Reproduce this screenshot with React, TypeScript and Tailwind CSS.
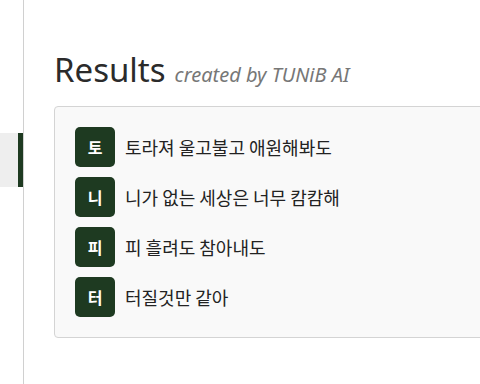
import React from "react";

const rows = [
  { k: "토", t: "토라져 울고불고 애원해봐도" },
  { k: "니", t: "니가 없는 세상은 너무 캄캄해" },
  { k: "피", t: "피 흘려도 참아내도" },
  { k: "터", t: "터질것만 같아" },
];

export default function App() {
  return (
    <div
      className="flex h-[384px] w-[480px] overflow-hidden bg-white"
      style={{ fontFamily: '"Noto Sans", "Noto Sans CJK KR", sans-serif' }}
    >
      <div className="flex w-[24px] shrink-0 flex-col border-r border-[#d0d0d0] pt-[133px]">
        <div className="flex h-[54px]">
          <div className="flex-1 bg-[#eeeeee]" />
          <div className="w-[5px] bg-[#1e3a21]" />
        </div>
      </div>
      <div className="flex min-w-0 flex-1 flex-col pl-[30px] pt-[48px]">
        <div className="flex items-baseline gap-[9px] whitespace-nowrap">
          <span className="text-[33px] leading-[44px] text-[#2b2b2b]">Results</span>
          <span className="text-[20px] italic text-[#777777]">created by TUNiB AI</span>
        </div>
        <div className="mt-[14px] flex w-[460px] shrink-0 flex-col gap-[10px] rounded-[4px] border border-[#d4d4d4] bg-[#f9f9f9] px-[20px] py-[20px]">
          {rows.map((r) => (
            <div key={r.k} className="flex items-center gap-[10px]">
              <div
                className="flex h-[40px] w-[40px] items-center justify-center rounded-[5px] bg-[#1e3a21] text-[16px] font-bold text-white"
                style={{ fontFamily: '"Noto Sans CJK KR", sans-serif' }}
              >
                {r.k}
              </div>
              <span
                className="text-[18px] text-[#222222]"
                style={{ fontFamily: '"Noto Sans CJK KR", sans-serif' }}
              >
                {r.t}
              </span>
            </div>
          ))}
        </div>
      </div>
    </div>
  );
}
